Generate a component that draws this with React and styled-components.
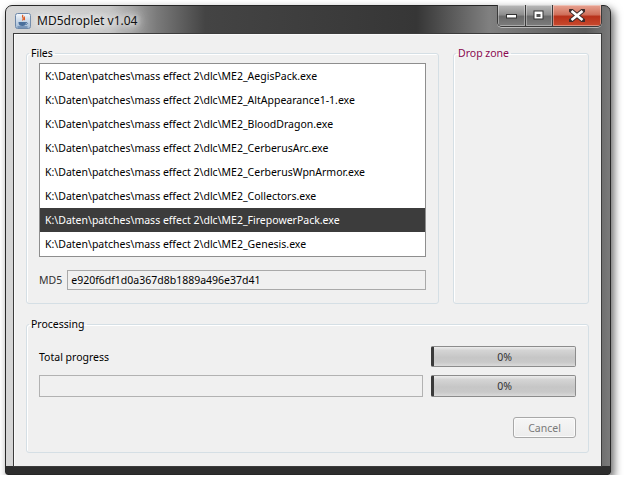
import React from 'react';
import styled, { createGlobalStyle } from 'styled-components';

const GlobalStyle = createGlobalStyle`
  body {
    margin: 0;
    background: #ffffff;
    font-family: "Noto Sans", "Liberation Sans", sans-serif;
  }
`;

const files = [
  'K:\\Daten\\patches\\mass effect 2\\dlc\\ME2_AegisPack.exe',
  'K:\\Daten\\patches\\mass effect 2\\dlc\\ME2_AltAppearance1-1.exe',
  'K:\\Daten\\patches\\mass effect 2\\dlc\\ME2_BloodDragon.exe',
  'K:\\Daten\\patches\\mass effect 2\\dlc\\ME2_CerberusArc.exe',
  'K:\\Daten\\patches\\mass effect 2\\dlc\\ME2_CerberusWpnArmor.exe',
  'K:\\Daten\\patches\\mass effect 2\\dlc\\ME2_Collectors.exe',
  'K:\\Daten\\patches\\mass effect 2\\dlc\\ME2_FirepowerPack.exe',
  'K:\\Daten\\patches\\mass effect 2\\dlc\\ME2_Genesis.exe',
];

const Window = styled.div`
  margin: 5px 0 0 5px;
  width: 606px;
  height: 470px;
  box-sizing: border-box;
  border: 1px solid #262626;
  border-radius: 7px 7px 3px 3px;
  padding: 0 8px 7px 7px;
  display: flex;
  flex-direction: column;
  background:
    linear-gradient(to bottom, transparent calc(100% - 8px), #2d2d2d calc(100% - 8px)),
    linear-gradient(to right, #d6d6d6 0%, #c6c6c6 17%, #7a7a7a 25%, #444 33%, #363636 68%, #808080 80%, #5a5a5a 96%, #7a7a7a 100%);
  box-shadow: 3px 4px 9px rgba(0, 0, 0, 0.6);
`;

const TitleBar = styled.div`
  height: 27px;
  display: flex;
  align-items: flex-start;
`;

const AppIcon = styled.svg`
  width: 16px;
  height: 16px;
  margin: 7px 6px 0 2px;
  flex: none;
`;

const Title = styled.div`
  font-family: "Noto Sans", "Liberation Sans", sans-serif;
  font-size: 12px;
  line-height: 16px;
  margin-top: 7px;
  color: #111;
  text-shadow: 0 0 6px #fff, 0 0 10px #fff, 0 0 14px #eee, 0 0 18px #ddd;
`;

const CaptionGroup = styled.div`
  margin-left: auto;
  margin-top: -1px;
  display: flex;
  height: 21px;
  border: 1px solid #3a3a3a;
  border-top: none;
  border-radius: 0 0 5px 5px;
  overflow: hidden;
  box-shadow: 0 1px 0 rgba(255, 255, 255, 0.5);
`;

const CaptionButton = styled.div`
  width: ${p => p.$w}px;
  display: flex;
  align-items: center;
  justify-content: center;
  border-left: ${p => (p.$first ? 'none' : '1px solid #3a3a3a')};
  background: ${p =>
    p.$close
      ? 'linear-gradient(to bottom, #e8a493 0%, #d0715c 45%, #b8321b 55%, #c94a2e 100%)'
      : 'linear-gradient(to bottom, #b9b9b9 0%, #8f8f8f 45%, #6a6a6a 55%, #7d7d7d 100%)'};
  box-shadow: inset 0 0 0 1px rgba(255, 255, 255, 0.35);
`;

const Client = styled.div`
  flex: 1;
  background: #f0f0f0;
  border: 1px solid #3c3c3c;
  box-shadow: inset 1px 1px 0 #fafafa;
  padding: 12px 12px 0 12px;
  display: flex;
  flex-direction: column;
  gap: 13px;
`;

const TopRow = styled.div`
  display: grid;
  grid-template-columns: 413px 136px;
  gap: 14px;
`;

const Group = styled.fieldset`
  margin: 0;
  min-width: 0;
  border: 1px solid #d5dfe5;
  border-radius: 3px;
  padding: ${p => p.$pad || '3px 12px 13px 12px'};
  box-shadow: inset 1px 1px 0 #fff;
`;

const Legend = styled.legend`
  padding: 0 2px;
  margin-left: -10px;
  font-size: 10.5px;
  line-height: 14px;
  color: ${p => p.$color || '#000'};
`;

const FileList = styled.div`
  border: 1px solid #8e8e8e;
  background: #fff;
  height: 192px;
  display: flex;
  flex-direction: column;
`;

const FileRow = styled.div`
  height: 24px;
  line-height: 24px;
  padding-left: 5px;
  font-size: 10.5px;
  white-space: nowrap;
  color: ${p => (p.$selected ? '#fff' : '#000')};
  background: ${p => (p.$selected ? '#3c3c3c' : 'transparent')};
`;

const HashRow = styled.div`
  margin-top: 13px;
  display: flex;
  align-items: center;
  gap: 5px;
`;

const Label = styled.span`
  font-size: 10.5px;
  color: ${p => (p.$muted ? '#333' : '#000')};
`;

const Field = styled.div`
  flex: 1;
  height: 20px;
  box-sizing: border-box;
  border: 1px solid #a9a9a9;
  background: #f0f0f0;
  font-size: 10.5px;
  line-height: 18px;
  padding-left: 3px;
  white-space: nowrap;
  overflow: hidden;
  color: #000;
`;

const ProgressGrid = styled.div`
  display: grid;
  grid-template-columns: 1fr 145px;
  column-gap: 8px;
  row-gap: 8px;
  align-items: center;
`;

const Progress = styled.div`
  height: ${p => p.$h}px;
  box-sizing: border-box;
  border: 1px solid #8c8c8c;
  border-left: 3px solid #3a3a3a;
  border-radius: 2px;
  background: linear-gradient(to bottom, #ececec 0%, #d4d4d4 18%, #c6c6c6 55%, #c9c9c9 80%, #dadada 100%);
  display: flex;
  align-items: center;
  justify-content: center;
  font-size: 10.5px;
  color: #333;
`;

const EmptyField = styled.div`
  height: 22px;
  box-sizing: border-box;
  border: 1px solid #b2b2b2;
  background: #f0f0f0;
`;

const ButtonRow = styled.div`
  display: flex;
  justify-content: flex-end;
  margin-top: 20px;
`;

const Button = styled.button`
  width: 63px;
  height: 21px;
  border: 1px solid #a8a8a8;
  border-radius: 3px;
  background: linear-gradient(to bottom, #f6f6f6, #ececec);
  box-shadow: inset 0 0 0 1px #fbfbfb;
  font-family: "Noto Sans", "Liberation Sans", sans-serif;
  font-size: 10.5px;
  color: #7a7a7a;
  padding: 0;
`;

const DropArea = styled.div`
  min-height: 100%;
`;

function JavaIcon() {
  return (
    <AppIcon viewBox="0 0 16 16">
      <defs>
        <linearGradient id="jbg" x1="0" y1="0" x2="0" y2="1">
          <stop offset="0" stopColor="#f4f8fc" />
          <stop offset="1" stopColor="#9fb8d4" />
        </linearGradient>
      </defs>
      <rect x="0.5" y="0.5" width="15" height="15" rx="2" fill="url(#jbg)" stroke="#6d87a8" />
      <path d="M8 2 C6 4 10 5 7.5 7.5 M9.5 3.5 C8.5 5 10.5 5.5 9 7.2" stroke="#e0561b" strokeWidth="1.2" fill="none" />
      <path d="M3.5 9 H11 C11 12 9.5 13 7.5 13 C5 13 3.5 12 3.5 9 Z" fill="#4a6f9c" />
      <path d="M11 9.5 C13 9.5 13 11.5 10.5 11.5" stroke="#4a6f9c" strokeWidth="1" fill="none" />
      <rect x="2.5" y="13.5" width="10" height="1" fill="#4a6f9c" />
    </AppIcon>
  );
}

function CaptionButtons() {
  return (
    <CaptionGroup>
      <CaptionButton $w={27} $first>
        <svg width="12" height="6" viewBox="0 0 12 6">
          <rect x="0.5" y="1.5" width="10" height="3.5" fill="#fff" stroke="#333" strokeWidth="1" />
        </svg>
      </CaptionButton>
      <CaptionButton $w={26}>
        <svg width="12" height="11" viewBox="0 0 12 11">
          <rect x="0.5" y="0.5" width="10" height="9" fill="#333" />
          <rect x="1.5" y="1.5" width="8" height="7" fill="#fff" />
          <rect x="3.5" y="4" width="4" height="3" fill="#555" />
        </svg>
      </CaptionButton>
      <CaptionButton $w={48} $close>
        <svg width="16" height="13" viewBox="0 0 16 13">
          <path d="M2 1.5 L14 11.5 M14 1.5 L2 11.5" stroke="#3a2a2a" strokeWidth="4.5" strokeLinecap="square" />
          <path d="M2.5 2 L13.5 11 M13.5 2 L2.5 11" stroke="#fff" strokeWidth="2.6" />
        </svg>
      </CaptionButton>
    </CaptionGroup>
  );
}

export default function App() {
  const selected = 6;
  return (
    <>
      <GlobalStyle />
      <Window>
        <TitleBar>
          <JavaIcon />
          <Title>MD5droplet v1.04</Title>
          <CaptionButtons />
        </TitleBar>
        <Client>
          <TopRow>
            <Group>
              <Legend>Files</Legend>
              <FileList>
                {files.map((f, i) => (
                  <FileRow key={f} $selected={i === selected}>{f}</FileRow>
                ))}
              </FileList>
              <HashRow>
                <Label $muted>MD5</Label>
                <Field>e920f6df1d0a367d8b1889a496e37d41</Field>
              </HashRow>
            </Group>
            <Group>
              <Legend $color="#8a0a50">Drop zone</Legend>
              <DropArea />
            </Group>
          </TopRow>
          <Group $pad="15px 12px 14px 12px">
            <Legend>Processing</Legend>
            <ProgressGrid>
              <Label>Total progress</Label>
              <Progress $h={21}>0%</Progress>
              <EmptyField />
              <Progress $h={22}>0%</Progress>
            </ProgressGrid>
            <ButtonRow>
              <Button>Cancel</Button>
            </ButtonRow>
          </Group>
        </Client>
      </Window>
    </>
  );
}
